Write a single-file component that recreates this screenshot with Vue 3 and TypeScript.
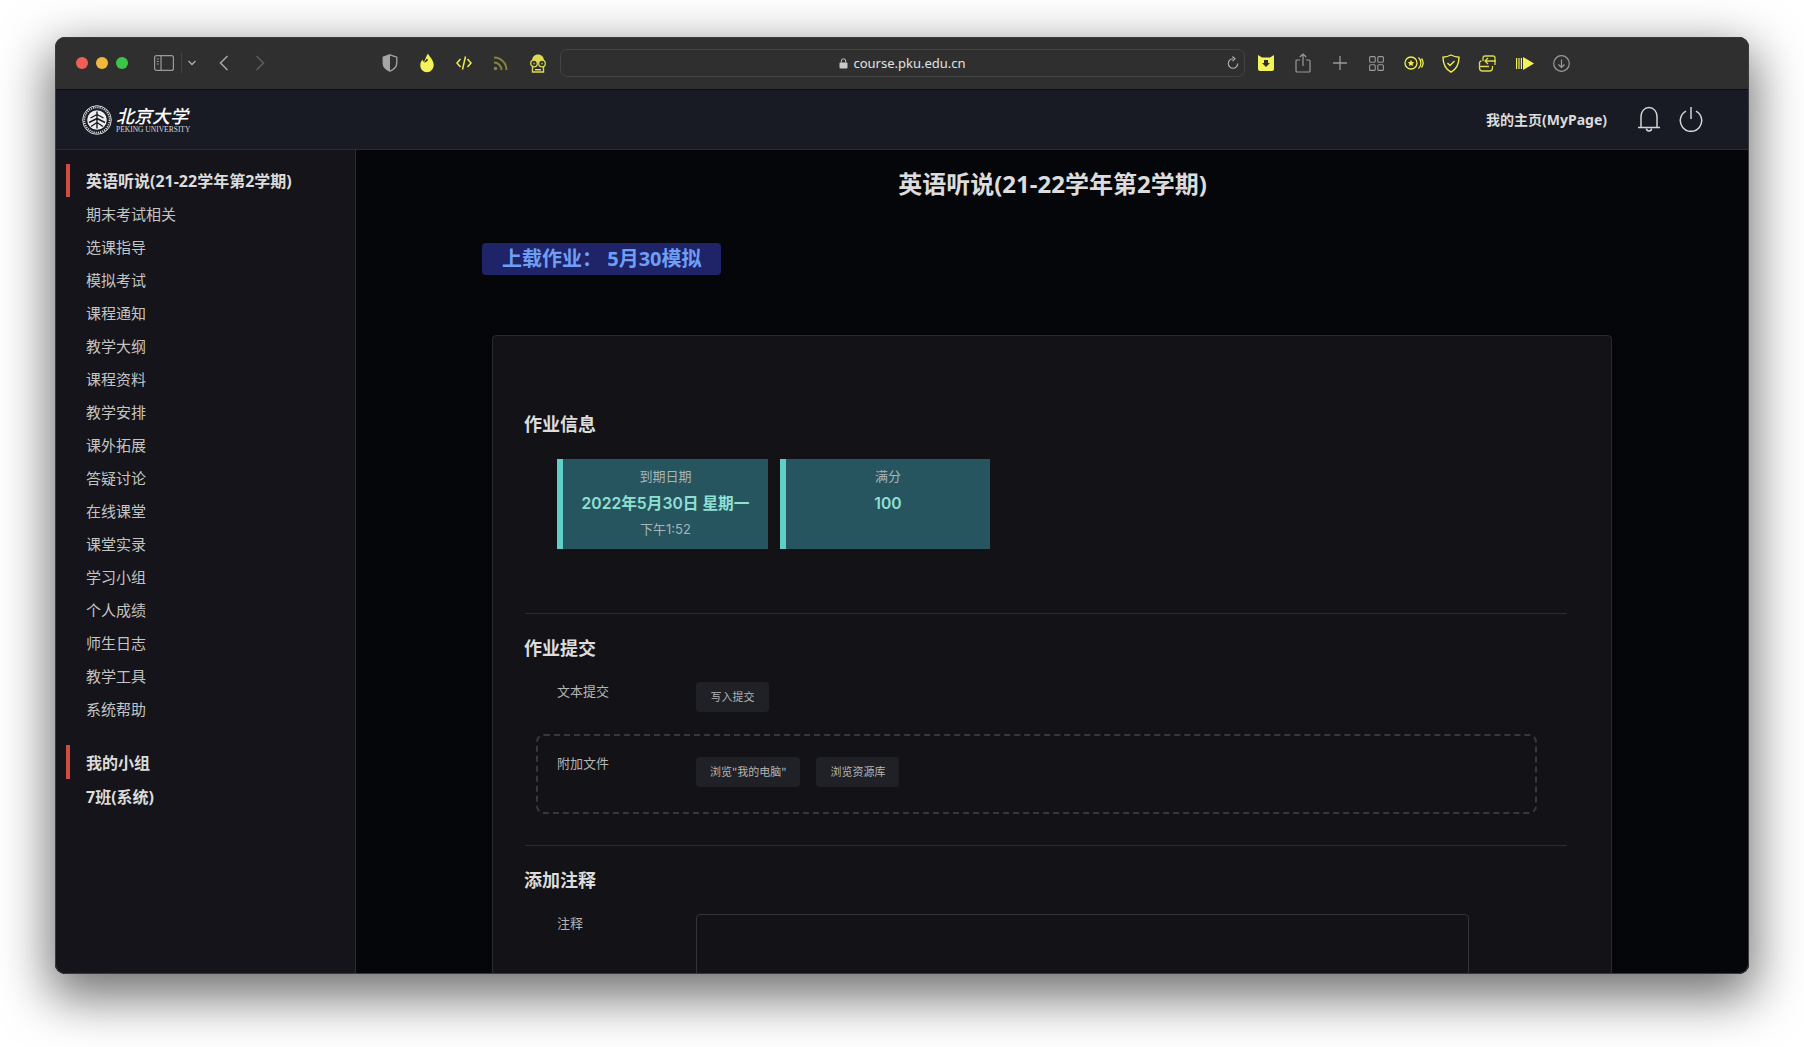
<script setup lang="ts">
const courseMenu = [
  '期末考试相关',
  '选课指导',
  '模拟考试',
  '课程通知',
  '教学大纲',
  '课程资料',
  '教学安排',
  '课外拓展',
  '答疑讨论',
  '在线课堂',
  '课堂实录',
  '学习小组',
  '个人成绩',
  '师生日志',
  '教学工具',
  '系统帮助',
]
</script>

<template>
  <div class="page">
    <div class="window">
      <div class="toolbar">
        <div class="lights">
          <span class="light red"></span>
          <span class="light yellow"></span>
          <span class="light green"></span>
        </div>
        <svg class="sidebar-toggle" width="20" height="16" viewBox="0 0 20 16" fill="none" stroke="#9a9a9a" stroke-width="1.2">
          <rect x="0.6" y="0.6" width="18.8" height="14.8" rx="2" />
          <path d="M7 1v14" />
          <path d="M2.8 4h2M2.8 6.5h2M2.8 9h2" />
        </svg>
        <span class="tool-sep"></span>
        <svg class="chevron" width="10" height="6" viewBox="0 0 10 6" fill="none" stroke="#a8a8a8" stroke-width="1.5">
          <path d="M1.5 1l3.5 3.5L8.500 1" />
        </svg>
        <svg class="back" width="10" height="16" viewBox="0 0 10 16" fill="none" stroke="#a8a8a8" stroke-width="1.5">
          <path d="M8.500 1L1.500 8l7 7" />
        </svg>
        <svg class="forward" width="10" height="16" viewBox="0 0 10 16" fill="none" stroke="#5e5e5e" stroke-width="1.500">
          <path d="M1.500 1l7 7-7 7" />
        </svg>

        <div class="ext-left">
          <span class="ext">
            <svg width="16" height="18" viewBox="0 0 16 18">
              <path d="M8 .8l6.800 2.400v5.600c0 4-3 6.900-6.800 8.400C4.200 15.700 1.200 12.800 1.200 8.800V3.200z" fill="none" stroke="#a5a5a5" stroke-width="1.300" />
              <path d="M8 .8L1.200 3.200v5.600c0 4 3 6.900 6.800 8.400z" fill="#a5a5a5" />
            </svg>
          </span>
          <span class="ext">
            <svg width="16" height="20" viewBox="0 0 16 20">
              <path d="M9 .5c.5 2.500 5.700 6 5.700 11.300 0 4.300-3 7.500-6.700 7.500s-6.700-3-6.700-7c0-2.500 1-4.200 2.300-5.800 0 1.500.7 2 1.300 2C6.500 7 6.800 3.500 9 .5z" fill="#f4f25a" />
              <path d="M8 5.500c-1 1.500-2.500 2.500-3 4 1.500 0 3.500-1 4-2.500z" fill="#2f2f2f" />
            </svg>
          </span>
          <span class="ext">
            <svg width="16" height="16" viewBox="0 0 16 16" fill="none" stroke="#eeec4f" stroke-width="1.500">
              <path d="M4.500 4L1 8l3.500 4M11.500 4L15 8l-3.500 4M9.500 1.500l-3 13" />
            </svg>
          </span>
          <span class="ext">
            <svg width="15" height="15" viewBox="0 0 15 15" fill="none" stroke="#85853a" stroke-width="2">
              <circle cx="2.500" cy="12.500" r="1.800" fill="#85853a" stroke="none" />
              <path d="M1 6.500a7.500 7.500 0 0 1 7.500 7.500M1 1.500A12.500 12.500 0 0 1 13.500 14" />
            </svg>
          </span>
          <span class="ext">
            <svg width="18" height="19" viewBox="0 0 18 19">
              <path d="M3 7C3 3 5.500 .6 9 .6S15 3 15 7v2H3z" fill="#dcda55" />
              <path d="M3.500 11v7h11v-7" fill="none" stroke="#dcda55" stroke-width="1.400" />
              <path d="M6 15h6v1.500H6z" fill="#dcda55" />
              <circle cx="5" cy="9.500" r="3.300" fill="#2f2f2f" stroke="#dcda55" stroke-width="1.300" />
              <circle cx="13" cy="9.500" r="3.300" fill="#2f2f2f" stroke="#dcda55" stroke-width="1.300" />
              <circle cx="5" cy="9.500" r="1" fill="#9c9b45" />
              <circle cx="13" cy="9.500" r="1" fill="#9c9b45" />
            </svg>
          </span>
        </div>

        <div class="url-bar">
          <span class="url">
            <svg width="9" height="11" viewBox="0 0 9 11">
              <rect x="0.500" y="4.500" width="8" height="6" rx="1" fill="#c9c9c9" />
              <path d="M2.300 4.500V3a2.200 2.200 0 0 1 4.400 0v1.500" fill="none" stroke="#c9c9c9" stroke-width="1" />
            </svg>
            course.pku.edu.cn
          </span>
          <svg class="reload" width="12" height="14" viewBox="0 0 12 14" fill="none" stroke="#b5b5b5" stroke-width="1.100">
            <path d="M6 2.800a4.700 4.700 0 1 0 4.700 4.700" />
            <path d="M5.500 .5L8 2.800 5.500 5" />
          </svg>
        </div>

        <div class="ext-right">
          <span class="ext">
            <svg width="18" height="18" viewBox="0 0 18 18">
              <path d="M1 1l4 2.500h8L17 1v14a2 2 0 0 1-2 2H3a2 2 0 0 1-2-2z" fill="#f5f35a" />
              <path d="M7 6h4v3h2l-4 4-4-4h2z" fill="#2f2f2f" />
            </svg>
          </span>
          <span class="ext">
            <svg width="16" height="20" viewBox="0 0 16 20" fill="none" stroke="#9a9a9a" stroke-width="1.200">
              <path d="M5 7H2a1 1 0 0 0-1 1v10a1 1 0 0 0 1 1h12a1 1 0 0 0 1-1V8a1 1 0 0 0-1-1h-3" />
              <path d="M8 13V1M4.800 4L8 1l3.200 3" />
            </svg>
          </span>
          <span class="ext">
            <svg width="14" height="14" viewBox="0 0 14 14" fill="none" stroke="#9a9a9a" stroke-width="1.300">
              <path d="M7 0v14M0 7h14" />
            </svg>
          </span>
          <span class="ext">
            <svg width="15" height="15" viewBox="0 0 15 15" fill="none" stroke="#9a9a9a" stroke-width="1.100">
              <rect x="0.600" y="0.600" width="5.600" height="5.600" rx="1" />
              <rect x="8.800" y="0.600" width="5.600" height="5.600" rx="1" />
              <rect x="0.600" y="8.800" width="5.600" height="5.600" rx="1" />
              <rect x="8.800" y="8.800" width="5.600" height="5.600" rx="1" />
            </svg>
          </span>
          <span class="ext">
            <svg width="20" height="14" viewBox="0 0 20 14" fill="none" stroke="#f0ee50" stroke-width="1.300">
              <circle cx="7" cy="7" r="6" />
              <path d="M14.500 1.500a7.500 7.500 0 0 1 0 11M17.500 2.500a7.500 7.500 0 0 1 0 9" />
              <path d="M7 3.800l1 2.100 2.300.3-1.700 1.600.4 2.300L7 9l-2 1.100.4-2.300-1.700-1.600 2.300-.3z" fill="#f0ee50" stroke="none" />
            </svg>
          </span>
          <span class="ext">
            <svg width="18" height="19" viewBox="0 0 18 19" fill="none" stroke="#f0ee50" stroke-width="1.400">
              <path d="M9 1c2.500 1.300 5 2 8 2.200 0 6.800-2.500 11.800-8 15C3.500 15 1 10 1 3.200 4 3 6.500 2.300 9 1z" />
              <path d="M5.500 9l2.500 2.500 4.500-4.500" />
            </svg>
          </span>
          <span class="ext">
            <svg width="19" height="17" viewBox="0 0 19 17" fill="none" stroke="#dcda50" stroke-width="1.300">
              <path d="M5 6V3a2 2 0 0 1 2-2h8a2 2 0 0 1 2 2v7" />
              <path d="M1.500 8v5a3 3 0 0 0 3 3h7a3 3 0 0 0 3-3v-2" />
              <path d="M1.500 8a2 2 0 0 1 2-2" />
              <path d="M10 3L7 6l3 3M7 6h11M2 11.500h9" />
            </svg>
          </span>
          <span class="ext">
            <svg width="18" height="13" viewBox="0 0 18 13" fill="#f4f25a">
              <path d="M0 1h1.200v11H0zM2.400 1h1.200v11H2.400zM4.800 1H6v11H4.800zM7 0l11 6.500L7 13z" />
            </svg>
          </span>
          <span class="ext">
            <svg width="17" height="17" viewBox="0 0 17 17" fill="none" stroke="#9a9a9a" stroke-width="1.200">
              <circle cx="8.500" cy="8.500" r="7.800" />
              <path d="M8.500 4.500v8M5.500 9.500l3 3 3-3" />
            </svg>
          </span>
        </div>
      </div>

      <header class="topbar">
        <div class="logo">
          <svg width="30" height="30" viewBox="0 0 30 30">
            <circle cx="15" cy="15" r="14.300" fill="none" stroke="#d8d8d8" stroke-width="1" />
            <circle cx="15" cy="15" r="12.600" fill="none" stroke="#d8d8d8" stroke-width="1.800" stroke-dasharray="1.200 1" />
            <circle cx="15" cy="15" r="9.800" fill="#eeeeee" />
            <path d="M15 6.500v17M15 9.500L8.500 13M15 9.500l6.500 3.500M15 13.500l-8 4M15 13.500l8 4M15 17.500l-6 4M15 17.500l6 4" fill="none" stroke="#181a24" stroke-width="1.400" />
          </svg>
          <div class="logo-words">
            <span class="logo-cn">北京大学</span>
            <span class="logo-en">PEKING UNIVERSITY</span>
          </div>
        </div>
        <div class="top-actions">
          <a class="my-page">我的主页(MyPage)</a>
          <svg class="bell" width="24" height="26" viewBox="0 0 24 26" fill="none" stroke="#d5d5d5" stroke-width="1.500">
            <path d="M4 21V10.500C4 5.500 7.500 1.500 12 1.500s8 4 8 9V21" />
            <path d="M1 21.500h22" />
            <path d="M9.500 22.500a2.500 2.500 0 0 0 5 0" />
          </svg>
          <svg class="power" width="24" height="26" viewBox="0 0 24 26" fill="none" stroke="#d5d5d5" stroke-width="1.500">
            <path d="M7 5.200a10.700 10.700 0 1 0 10 0" />
            <path d="M12 1v12" />
          </svg>
        </div>
      </header>

      <div class="body">
        <aside class="sidebar">
          <div class="nav-head">英语听说(21-22学年第2学期)</div>
          <div v-for="item in courseMenu" :key="item" class="nav-item">{{ item }}</div>
          <div class="nav-head group-head">我的小组</div>
          <div class="nav-sub">7班(系统)</div>
        </aside>

        <main class="content">
          <h1 class="course-title">英语听说(21-22学年第2学期)</h1>
          <div class="upload-badge">上载作业： 5月30模拟</div>

          <section class="card">
            <h2 class="section-title">作业信息</h2>
            <div class="tiles">
              <div class="tile">
                <span class="tile-label">到期日期</span>
                <strong class="tile-value">2022年5月30日 星期一</strong>
                <span class="tile-label tile-time">下午1:52</span>
              </div>
              <div class="tile">
                <span class="tile-label">满分</span>
                <strong class="tile-value">100</strong>
              </div>
            </div>

            <hr class="rule first-rule" />

            <h2 class="section-title">作业提交</h2>
            <div class="form-row text-row">
              <span class="form-label">文本提交</span>
              <button class="btn">写入提交</button>
            </div>
            <div class="drop-box">
              <span class="form-label">附加文件</span>
              <button class="btn">浏览"我的电脑"</button>
              <button class="btn second-btn">浏览资源库</button>
            </div>

            <hr class="rule second-rule" />

            <h2 class="section-title">添加注释</h2>
            <div class="form-row note-row">
              <span class="form-label">注释</span>
              <div class="note-input"></div>
            </div>
          </section>
        </main>
      </div>
    </div>
  </div>
</template>

<style>
html,
body {
  margin: 0;
  background: #ffffff;
}
</style>

<style scoped>
.page {
  width: 1804px;
  height: 1047px;
  padding: 37px 55px 73px;
  box-sizing: border-box;
  background: #ffffff;
  overflow: hidden;
  font-family: "Noto Sans", "Noto Sans CJK SC", sans-serif;
}

.window {
  width: 1694px;
  height: 937px;
  position: relative;
  display: flex;
  flex-direction: column;
  border-radius: 10px;
  overflow: hidden;
  background: #14141a;
  box-shadow: 0 18px 50px 6px rgba(0, 0, 0, 0.55);
}

/* thin rim drawn over the window contents */
.window::after {
  content: "";
  position: absolute;
  inset: 0;
  border-radius: 10px;
  box-shadow: inset 0 0 0 1px #3a3a3c;
  pointer-events: none;
}

.toolbar {
  height: 53px;
  flex: none;
  box-sizing: border-box;
  display: flex;
  align-items: center;
  background: #2f2f2f;
  border-bottom: 1px solid #0d0d0d;
  padding-left: 21px;
}

.lights {
  display: flex;
  gap: 8px;
}

.light {
  width: 12px;
  height: 12px;
  border-radius: 50%;
}

.red { background: #ee5f57; }
.yellow { background: #f3b73d; }
.green { background: #3dc54a; }

.sidebar-toggle {
  margin-left: 26px;
}

.tool-sep {
  width: 1px;
  height: 20px;
  margin-left: 7px;
  background: #444444;
}

.chevron {
  margin-left: 5px;
}

.back {
  margin-left: 22px;
}

.forward {
  margin-left: 26px;
}

.ext-left {
  display: flex;
  margin-left: 106px;
}

.ext-left .ext {
  width: 37px;
}

.ext {
  height: 24px;
  display: flex;
  align-items: center;
  justify-content: center;
}

.url-bar {
  width: 685px;
  height: 28px;
  margin-left: 4px;
  box-sizing: border-box;
  display: flex;
  align-items: center;
  justify-content: center;
  position: relative;
  border: 1px solid #444444;
  border-radius: 7px;
  background: #2f2f2f;
}

.url {
  display: flex;
  align-items: center;
  gap: 5px;
  font-size: 13px;
  color: #e2e2e2;
}

.reload {
  position: absolute;
  right: 5px;
  top: 6px;
}

.ext-right {
  display: flex;
  margin-left: 2px;
}

.ext-right .ext {
  width: 37px;
}

.topbar {
  height: 60px;
  flex: none;
  display: flex;
  align-items: center;
  justify-content: space-between;
  box-sizing: border-box;
  padding: 0 46px 0 27px;
  background: #181a24;
  border-bottom: 1px solid #2c2d33;
}

.logo {
  display: flex;
  align-items: center;
  gap: 4px;
}

.logo-words {
  display: flex;
  flex-direction: column;
  color: #ffffff;
}

.logo-cn {
  font-family: "Noto Sans CJK SC", sans-serif;
  font-size: 18px;
  line-height: 20px;
  font-style: italic;
  font-weight: 500;
}

.logo-en {
  font-family: "Liberation Serif", serif;
  font-size: 7.500px;
  line-height: 9px;
  color: #d8d8d8;
  white-space: nowrap;
}

.top-actions {
  display: flex;
  align-items: center;
  padding-bottom: 2px;
}

.my-page {
  font-size: 14px;
  font-weight: 700;
  color: #dcdcdc;
}

.bell {
  margin-left: 30px;
}

.power {
  margin-left: 18px;
}

.body {
  flex: 1;
  min-height: 0;
  display: flex;
}

.sidebar {
  width: 301px;
  flex: none;
  box-sizing: border-box;
  padding-top: 14px;
  background: #14141a;
  border-right: 1px solid #2c2d33;
}

.nav-head {
  height: 33px;
  line-height: 35px;
  margin-left: 11px;
  padding-left: 16px;
  border-left: 4px solid #d04c3f;
  font-size: 16px;
  font-weight: 700;
  color: #dcdcdc;
}

.group-head {
  margin-top: 20px;
  height: 34px;
  line-height: 36px;
}

.nav-item,
.nav-sub {
  height: 33px;
  line-height: 35px;
  padding-left: 31px;
  font-size: 15px;
  color: #c4c4c4;
}

.nav-sub {
  height: 34px;
  line-height: 36px;
  font-size: 16px;
  font-weight: 700;
  color: #dcdcdc;
}

.content {
  flex: 1;
  min-width: 0;
  overflow: hidden;
  background: #05060a;
  padding-top: 17px;
}

.course-title {
  margin: 0;
  height: 34px;
  line-height: 34px;
  text-align: center;
  font-size: 24px;
  font-weight: 700;
  color: #dcdcdc;
}

.upload-badge {
  width: 239px;
  height: 32px;
  margin: 42px 0 0 126px;
  box-sizing: border-box;
  padding-left: 20px;
  line-height: 32px;
  border-radius: 4px;
  background: #1f2468;
  color: #6f9ef5;
  font-size: 20px;
  font-weight: 700;
  white-space: pre;
}

.card {
  width: 1120px;
  margin: 60px 0 0 136px;
  box-sizing: border-box;
  padding: 75px 44px 0 32px;
  background: #121217;
  border: 1px solid #2a2a2e;
  border-radius: 4px;
}

.section-title {
  margin: 0 0 0 -1px;
  height: 26px;
  line-height: 26px;
  font-size: 18px;
  font-weight: 700;
  color: #dcdcdc;
}

.tiles {
  display: flex;
  gap: 12px;
  margin: 22px 0 0 32px;
}

.tile {
  width: 211px;
  height: 90px;
  box-sizing: border-box;
  padding-top: 7px;
  display: flex;
  flex-direction: column;
  align-items: center;
  border-left: 6px solid #5fcfc8;
  background: #265560;
  font-family: Inter, "Noto Sans CJK SC", sans-serif;
}

.tile + .tile {
  width: 210px;
}

.tile-label {
  font-size: 13px;
  line-height: 20px;
  color: #a9b4b5;
}

.tile-value {
  margin-top: 7px;
  font-size: 15.700px;
  line-height: 22px;
  font-weight: 600;
  color: #8fe0d4;
}

.tile-time {
  margin-top: 4px;
}

.rule {
  height: 1px;
  margin: 0;
  border: 0;
  background: #2c2c30;
}

.first-rule {
  margin: 64px 0 21px;
}

.form-row {
  display: flex;
  align-items: flex-start;
  padding-left: 32px;
}

.text-row {
  margin-top: 21px;
}

.form-label {
  width: 139px;
  flex: none;
  font-size: 13px;
  line-height: 18px;
  color: #b5b5b5;
}

.btn {
  height: 30px;
  padding: 0 14px 2px;
  border: 0;
  border-radius: 4px;
  background: #202126;
  color: #b5b5b5;
  font-family: "Noto Sans CJK SC", sans-serif;
  font-size: 11px;
}

.text-row .btn {
  width: 73px;
}

.second-btn {
  margin-left: 16px;
}

.drop-box {
  width: 1001px;
  height: 80px;
  margin: 22px 0 0 11px;
  box-sizing: border-box;
  padding: 21px 0 0 19px;
  display: flex;
  align-items: flex-start;
  border: 2px dashed #38383c;
  border-radius: 8px;
}

.drop-box .form-label {
  margin-top: -3px;
}

.second-rule {
  margin: 31px 0 21px;
}

.note-row {
  margin-top: 21px;
}

.note-input {
  width: 773px;
  height: 200px;
  box-sizing: border-box;
  border: 1px solid #333338;
  border-radius: 4px;
}
</style>
